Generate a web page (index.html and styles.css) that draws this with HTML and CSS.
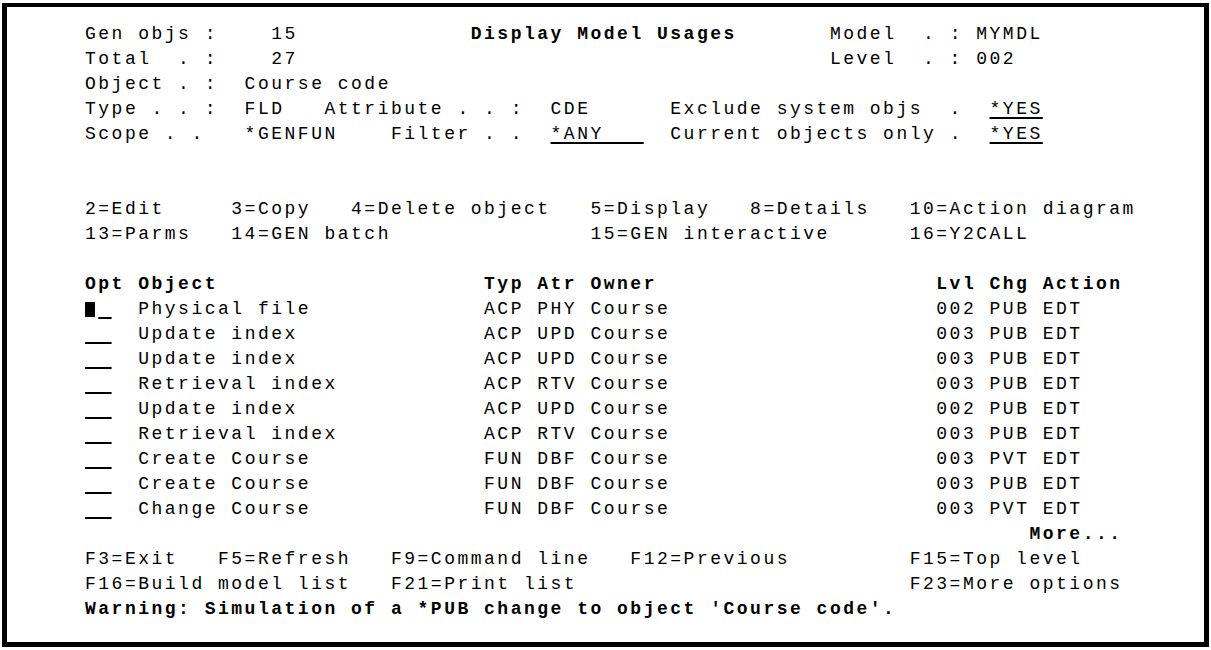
FILE: index.html
```html
<!DOCTYPE html>
<html lang="en">
<head>
    <meta charset="UTF-8">
    <title>Display Model Usages</title>
    <link rel="stylesheet" href="styles.css">
</head>
<body>

    <!-- 5250 screen, 24 rows -->
    <div class="screen">
        <div class="ln">Gen objs :    15             <span class="hi">Display Model Usages</span>       Model  . : MYMDL</div>
        <div class="ln">Total  . :    27                                        Level  . : 002</div>
        <div class="ln">Object . :  Course code</div>
        <div class="ln">Type . . :  FLD   Attribute . . :  CDE      Exclude system objs  .  <span class="fld">*YES</span></div>
        <div class="ln">Scope . .   *GENFUN    Filter . .  <span class="fld">*ANY   </span>  Current objects only .  <span class="fld">*YES</span></div>
        <div class="ln"></div>
        <div class="ln"></div>
        <div class="ln">2=Edit     3=Copy   4=Delete object   5=Display   8=Details   10=Action diagram</div>
        <div class="ln">13=Parms   14=GEN batch               15=GEN interactive      16=Y2CALL</div>
        <div class="ln"></div>
        <div class="ln hi">Opt Object                    Typ Atr Owner                     Lvl Chg Action</div>
        <div class="ln"><span class="cur"></span><span class="fld"> </span>  Physical file             ACP PHY Course                    002 PUB EDT</div>
        <div class="ln"><span class="fld">  </span>  Update index              ACP UPD Course                    003 PUB EDT</div>
        <div class="ln"><span class="fld">  </span>  Update index              ACP UPD Course                    003 PUB EDT</div>
        <div class="ln"><span class="fld">  </span>  Retrieval index           ACP RTV Course                    003 PUB EDT</div>
        <div class="ln"><span class="fld">  </span>  Update index              ACP UPD Course                    002 PUB EDT</div>
        <div class="ln"><span class="fld">  </span>  Retrieval index           ACP RTV Course                    003 PUB EDT</div>
        <div class="ln"><span class="fld">  </span>  Create Course             FUN DBF Course                    003 PVT EDT</div>
        <div class="ln"><span class="fld">  </span>  Create Course             FUN DBF Course                    003 PUB EDT</div>
        <div class="ln"><span class="fld">  </span>  Change Course             FUN DBF Course                    003 PVT EDT</div>
        <div class="ln">                                                                       <span class="hi">More...</span></div>
        <div class="ln">F3=Exit   F5=Refresh   F9=Command line   F12=Previous         F15=Top level</div>
        <div class="ln">F16=Build model list   F21=Print list                         F23=More options</div>
        <div class="ln hi">Warning: Simulation of a *PUB change to object 'Course code'.</div>
    </div>

</body>
</html>
```
FILE: styles.css
```css
body {
    background-color: #ffffff;
    color: #000000;
    margin: 0;
    padding: 0;
}

.screen {
    box-sizing: border-box;
    width: 1207px;
    height: 644px;
    margin: 3px 0 0 2px;
    border: 5px solid #000000;
    border-top-width: 4px;
    padding: 15px 0 0 78px;
    font-family: "Liberation Mono", monospace;
    font-size: 18px;
    letter-spacing: 2.5px;
}

/* one screen row */
.ln {
    height: 25px;
    line-height: 25px;
    white-space: pre;
}

/* high intensity */
.hi {
    font-weight: bold;
}

/* input field */
.fld {
    text-decoration: underline;
    text-decoration-thickness: 2px;
    text-underline-offset: 3px;
}

.cur {
    display: inline-block;
    width: 10px;
    height: 15px;
    margin-right: 3.3px;
    background-color: #000000;
    vertical-align: -3px;
}
```
